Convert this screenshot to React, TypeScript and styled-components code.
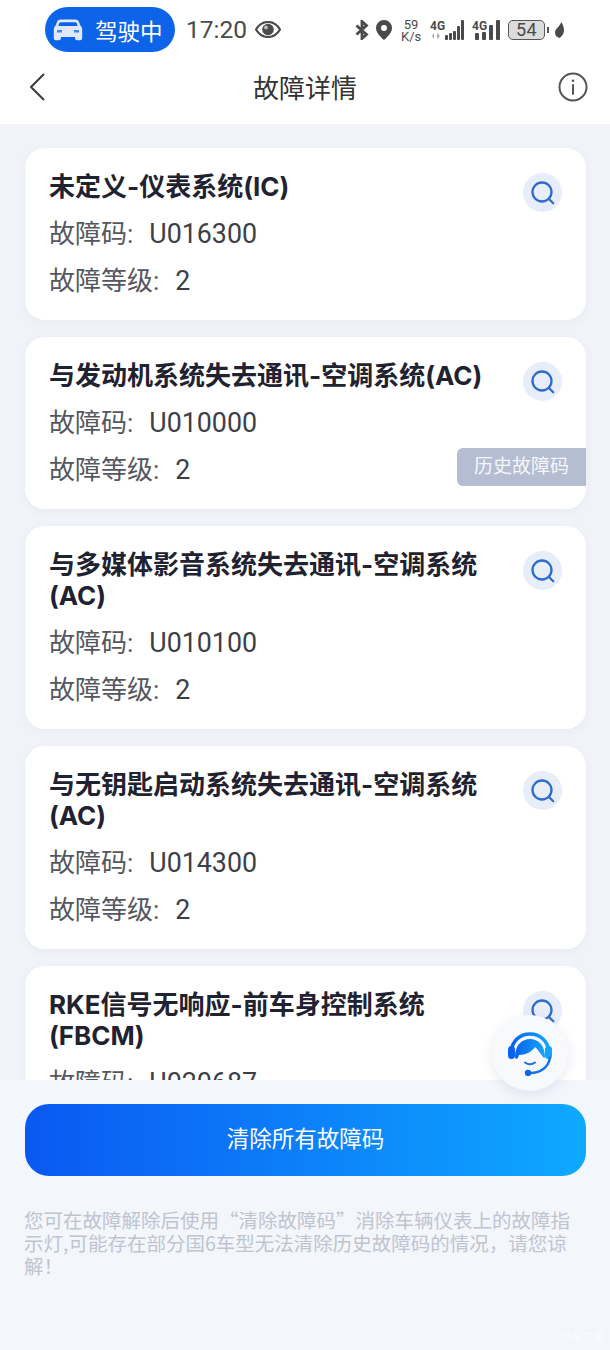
import React from 'react';
import styled, { createGlobalStyle } from 'styled-components';

const GlobalStyle = createGlobalStyle`
	html, body {
		margin: 0;
		padding: 0;
		background: #f3f6fb;
	}
	* {
		box-sizing: border-box;
	}
`;

const FONT = `Roboto, "Noto Sans CJK SC", "Noto Sans", sans-serif`;

const Page = styled.div`
	color: #22252e;
	display: flex;
	flex-direction: column;
	font-family: ${FONT};
	height: 1350px;
	overflow: hidden;
	position: relative;
	width: 610px;
`;

const Header = styled.header`
	background: #fff;
	flex: none;
`;

const StatusBar = styled.div`
	align-items: center;
	color: #4a4a4a;
	display: flex;
	height: 52px;
	padding: 7px 46px 0 45px;
`;

const DrivePill = styled.div`
	align-items: center;
	background: #0e64e8;
	border-radius: 23px;
	color: #fff;
	display: flex;
	font-size: 22.5px;
	gap: 12px;
	height: 45px;
	padding-left: 8px;
	width: 130px;
`;

const Clock = styled.span`
	font-size: 24.5px;
	margin-left: 11px;
`;

const EyeSlot = styled.span`
	display: flex;
	margin-left: 8px;
`;

const StatusRight = styled.div`
	align-items: center;
	display: flex;
	margin-left: auto;
`;

const Speed = styled.div`
	font-size: 13px;
	line-height: 12px;
	margin: 2px 9px 0 9px;
	text-align: center;
	width: 20px;
`;

const Signal = styled.div`
	align-items: flex-end;
	display: flex;
	margin-right: 8px;
	position: relative;
`;

const NetLabel = styled.span`
	font-size: 12px;
	font-weight: 700;
	left: 0;
	line-height: 12px;
	position: absolute;
	top: 0;
`;

const TransferArrows = styled.svg`
	bottom: 1px;
	left: 2px;
	position: absolute;
`;

const Bars = styled.div<{ $pad: number; $gap: number }>`
	align-items: flex-end;
	display: flex;
	gap: ${(props) => props.$gap}px;
	height: 20px;
	padding-left: ${(props) => props.$pad}px;
`;

const Bar = styled.i<{ $h: number; $w: number }>`
	background: #4a4a4a;
	border-radius: 1px;
	display: block;
	height: ${(props) => props.$h}px;
	width: ${(props) => props.$w}px;
`;

const Battery = styled.div`
	align-items: center;
	background: #dcdcdc;
	border: 1.5px solid #555;
	border-radius: 5px;
	display: flex;
	font-size: 18px;
	height: 20px;
	justify-content: center;
	letter-spacing: 0.5px;
	width: 37px;
`;

const BatteryTip = styled.i`
	background: #555;
	display: block;
	height: 6px;
	margin: 0 6px 0 2px;
	width: 2px;
`;

const NavBar = styled.div`
	align-items: center;
	display: flex;
	height: 72px;
	justify-content: space-between;
	padding: 0 22px 2px 29px;
	position: relative;
`;

const NavTitle = styled.h1`
	color: #333;
	font-size: 26px;
	font-weight: 400;
	left: 0;
	margin: 0;
	position: absolute;
	right: 0;
	text-align: center;
	top: 16px;
`;

const List = styled.main`
	background: #f1f3f9;
	display: flex;
	flex: 1;
	flex-direction: column;
	gap: 17px;
	min-height: 0;
	overflow: hidden;
	padding: 24px 24px 0 25px;
`;

const Card = styled.section`
	background: #fff;
	border-radius: 20px;
	box-shadow: 0 2px 8px rgba(120, 130, 170, 0.07);
	flex: none;
	padding: 24px 24px 15px;
	position: relative;
`;

const TitleRow = styled.div`
	align-items: flex-start;
	display: flex;
	justify-content: space-between;
	margin-bottom: 8px;
`;

const CardTitle = styled.h2`
	color: #1f2230;
	font-family: Inter, "Noto Sans CJK SC", "Noto Sans", sans-serif;
	font-size: 26px;
	font-weight: 700;
	line-height: 31px;
	margin: -1px 0 1px;
	width: 440px;
`;

const SearchButton = styled.button`
	align-items: center;
	background: #e7edf9;
	border: 0;
	border-radius: 50%;
	display: flex;
	flex: none;
	height: 39px;
	justify-content: center;
	margin: 1px 0 -9px;
	padding: 0;
	width: 39px;
`;

const InfoRow = styled.div`
	color: #54575f;
	font-size: 26px;
	line-height: 47px;
`;

const InfoValue = styled.span`
	color: #3c3f47;
	font-size: 26.8px;
	margin-left: 16px;
`;

const HistoryTag = styled.div`
	background: #b4bdd2;
	border-radius: 6px 0 0 6px;
	color: #f5f7fb;
	font-size: 19px;
	height: 38px;
	line-height: 38px;
	position: absolute;
	right: 0;
	text-align: center;
	top: 111px;
	width: 129px;
`;

const Footer = styled.footer`
	background: #f3f6fb;
	flex: none;
	height: 270px;
	padding: 24px 24px 0 25px;
`;

const ClearButton = styled.button`
	background: linear-gradient(90deg, #0a58f2 0%, #0ea9ff 100%);
	border: 0;
	border-radius: 24px;
	color: #fff;
	display: block;
	font-family: ${FONT};
	font-size: 22.5px;
	height: 72px;
	padding: 0 0 6px;
	width: 100%;
`;

const Note = styled.p`
	color: #bfc4d0;
	font-family: "Noto Sans CJK SC", "Noto Sans", sans-serif;
	font-size: 19.5px;
	line-height: 23px;
	margin: 32px 0 0 -1px;
	padding-right: 6px;
`;

const AgentButton = styled.div`
	align-items: center;
	background: #f7f9fc;
	border-radius: 50%;
	box-shadow: 0 3px 12px rgba(120, 135, 170, 0.18);
	display: flex;
	height: 76px;
	justify-content: center;
	left: 492px;
	position: absolute;
	top: 1015px;
	width: 76px;
`;

const Watermark = styled.span`
	bottom: 6px;
	color: rgba(255, 255, 255, 0.8);
	font-size: 11px;
	position: absolute;
	right: 6px;
`;

function CarIcon() {
	return (
		<svg width="30" height="24" viewBox="0 0 30 24" fill="#dfe9fb">
			<path d="M7.5 1.5h15c1.6 0 2.7.7 3.4 2.2l1.6 4c1.1.9 1.7 2 1.7 3.5v9c0 1.2-.8 2-2 2h-3.1c-1.2 0-2-.8-2-2v-1.2H7.9v1.2c0 1.2-.8 2-2 2H2.800c-1.200 0-2-.8-2-2v-9c0-1.500.6-2.600 1.700-3.500l1.600-4C4.800 2.200 5.900 1.500 7.500 1.500z" />
			<path d="M7.800 4.200c-.7 0-1.200.3-1.500 1L5.200 8h19.600l-1.100-2.800c-.3-.7-.8-1-1.500-1z" fill="#0e64e8" />
			<path d="M4 12h5v2.500H4zM21 12h5v2.500h-5z" fill="#0e64e8" opacity="0.75" />
		</svg>
	);
}

function EyeIcon() {
	return (
		<svg width="26" height="17" viewBox="0 0 26 17">
			<path d="M1 8.500C4 3.500 8 1 13 1s9 2.500 12 7.500C22 13.500 18 16 13 16S4 13.500 1 8.500z" fill="none" stroke="#4a4a4a" strokeWidth="2.200" />
			<circle cx="13" cy="8.500" r="5.800" fill="#4a4a4a" />
			<circle cx="11" cy="6.500" r="2" fill="#bbb" />
		</svg>
	);
}

function BluetoothIcon() {
	return (
		<svg width="14" height="20" viewBox="0 0 14 20" fill="none" stroke="#4a4a4a" strokeWidth="2.800">
			<path d="M1.500 5.500l10 9-4.500 4V1.500l4.500 4-10 9" />
		</svg>
	);
}

function PinIcon() {
	return (
		<svg width="16" height="20" viewBox="0 0 16 20" style={{ marginLeft: 7 }}>
			<path fillRule="evenodd" fill="#4a4a4a" d="M8 0a8 8 0 0 1 8 8c0 4.500-4 8.500-8 12-4-3.500-8-7.500-8-12a8 8 0 0 1 8-8zm0 5a3 3 0 1 0 0 6 3 3 0 0 0 0-6z" />
		</svg>
	);
}

function LeafIcon() {
	return (
		<svg width="9" height="16" viewBox="0 0 9 16">
			<path d="M6.500 0C8 3 9 5.500 9 8.500c0 3.500-2.500 6-4.500 7.500C2 15.500 0 13.500 0 10.500 0 7 4.500 4.500 6.500 0z" fill="#4a4a4a" />
		</svg>
	);
}

function BackIcon() {
	return (
		<svg width="16" height="28" viewBox="0 0 16 28" fill="none" stroke="#3a3a3a" strokeWidth="2" strokeLinecap="round" strokeLinejoin="round">
			<path d="M14.500 1.500L2 14l12.500 12.500" />
		</svg>
	);
}

function InfoIcon() {
	return (
		<svg width="30" height="30" viewBox="0 0 30 30" fill="none" stroke="#555" strokeWidth="2">
			<circle cx="15" cy="15" r="13.500" />
			<path d="M15 13v9" strokeLinecap="round" />
			<circle cx="15" cy="8.800" r="1.300" fill="#555" stroke="none" />
		</svg>
	);
}

function SearchIcon() {
	return (
		<svg width="24" height="24" viewBox="0 0 24 24" fill="none" stroke="#2f6cc9" strokeWidth="2.300" strokeLinecap="round">
			<circle cx="11" cy="11" r="9.500" />
			<path d="M18 18l4.200 4.200" />
		</svg>
	);
}

function AgentIcon() {
	return (
		<svg width="44" height="44" viewBox="0 0 44 44" style={{ marginTop: 2 }}>
			<defs>
				<linearGradient id="agentFill" x1="0" y1="0" x2="1" y2="0">
					<stop offset="0" stopColor="#0b62ee" />
					<stop offset="1" stopColor="#12a4fb" />
				</linearGradient>
			</defs>
			<path d="M3.500 19C4 9 12 2 22 2s18 7 18.500 17" fill="none" stroke="url(#agentFill)" strokeWidth="3.600" />
			<rect x="0" y="14" width="7" height="13" rx="3.500" fill="#0b62ee" />
			<rect x="37" y="14" width="7" height="13" rx="3.500" fill="#12a4fb" />
			<path d="M7 25C7 13 14 7 22 7s15 6 15 18c0 1-1.200 1-2 0-3-4-5-7.500-8-10-3 5-10 8-16 8l-1 3c-1.500 1-3 1-3-1z" fill="url(#agentFill)" />
			<path d="M17 30.500Q22 34 27 30.500" fill="none" stroke="#1b6fd8" strokeWidth="2" strokeLinecap="round" />
			<path d="M42 26C40 36 32 41 22 41" fill="none" stroke="#1272e6" strokeWidth="2.400" strokeLinecap="round" />
			<circle cx="20" cy="41" r="3.200" fill="#0f66e6" />
		</svg>
	);
}

interface Fault {
	title: string;
	code: string;
	level: number;
	hasHistory?: boolean;
}

const FAULTS: Fault[] = [
	{ title: '未定义-仪表系统(IC)', code: 'U016300', level: 2 },
	{ title: '与发动机系统失去通讯-空调系统(AC)', code: 'U010000', level: 2, hasHistory: true },
	{ title: '与多媒体影音系统失去通讯-空调系统(AC)', code: 'U010100', level: 2 },
	{ title: '与无钥匙启动系统失去通讯-空调系统(AC)', code: 'U014300', level: 2 },
	{ title: 'RKE信号无响应-前车身控制系统(FBCM)', code: 'U020687', level: 2 },
];

function FaultCard({ title, code, level, hasHistory }: Fault) {
	return (
		<Card>
			<TitleRow>
				<CardTitle>{title}</CardTitle>
				<SearchButton>
					<SearchIcon />
				</SearchButton>
			</TitleRow>
			<InfoRow>
				故障码:<InfoValue>{code}</InfoValue>
			</InfoRow>
			<InfoRow>
				故障等级:<InfoValue>{level}</InfoValue>
			</InfoRow>
			{hasHistory ? <HistoryTag>历史故障码</HistoryTag> : null}
		</Card>
	);
}

export default function App() {
	return (
		<Page>
			<GlobalStyle />
			<Header>
				<StatusBar>
					<DrivePill>
						<CarIcon />
						驾驶中
					</DrivePill>
					<Clock>17:20</Clock>
					<EyeSlot>
						<EyeIcon />
					</EyeSlot>
					<StatusRight>
						<BluetoothIcon />
						<PinIcon />
						<Speed>
							59
							<br />
							K/s
						</Speed>
						<Signal>
							<NetLabel>4G</NetLabel>
							<TransferArrows width="9" height="6" viewBox="0 0 9 6" fill="#aaa">
								<path d="M0 3l2-3v6zM5 0l3 3-3 3z" />
							</TransferArrows>
							<Bars $pad={15} $gap={1}>
								{[5, 7, 9, 14, 20].map((h) => (
									<Bar key={h} $h={h} $w={3} />
								))}
							</Bars>
						</Signal>
						<Signal>
							<NetLabel>4G</NetLabel>
							<Bars $pad={3} $gap={3}>
								{[7, 8, 15, 20].map((h) => (
									<Bar key={h} $h={h} $w={4} />
								))}
							</Bars>
						</Signal>
						<Battery>54</Battery>
						<BatteryTip />
						<LeafIcon />
					</StatusRight>
				</StatusBar>
				<NavBar>
					<BackIcon />
					<NavTitle>故障详情</NavTitle>
					<InfoIcon />
				</NavBar>
			</Header>
			<List>
				{FAULTS.map((fault) => (
					<FaultCard key={fault.code} {...fault} />
				))}
			</List>
			<Footer>
				<ClearButton>清除所有故障码</ClearButton>
				<Note>
					您可在故障解除后使用“清除故障码”消除车辆仪表上的故障指示灯,可能存在部分国6车型无法清除历史故障码的情况，请您谅解！
				</Note>
			</Footer>
			<AgentButton>
				<AgentIcon />
			</AgentButton>
			<Watermark>汽车之家</Watermark>
		</Page>
	);
}
